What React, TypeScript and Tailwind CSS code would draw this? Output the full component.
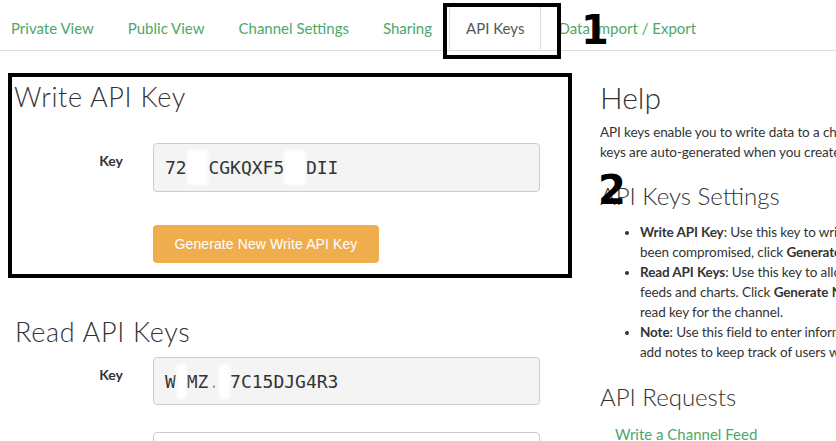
import React from "react";

const Hidden = ({ n }: { n: number }) => (
  <span className="inline-block bg-white text-transparent rounded-[4px] blur-[1.5px] my-[-4px] py-[4px]">
    {"X".repeat(n)}
  </span>
);

export default function App() {
  const tabs = ["Private View", "Public View", "Channel Settings", "Sharing", "API Keys", "Data Import / Export"];
  return (
    <div className="relative w-[836px] h-[441px] overflow-hidden bg-white text-[#333] font-['Lato',sans-serif]">
      {/* Tabs */}
      <ul className="flex pt-[6px] border-b border-[#ddd] ml-[-6px]">
        {tabs.map((t) =>
          t === "API Keys" ? (
            <li key={t} className="mb-[-1px]">
              <span className="block px-[16px] py-[11px] leading-[20px] text-[15px] text-[#555] bg-white border border-[#ddd] border-b-white rounded-t-[4px]">
                {t}
              </span>
            </li>
          ) : (
            <li key={t}>
              <span className="block px-[16px] py-[11px] leading-[20px] text-[15px] text-[#4ea769] border border-transparent">
                {t}
              </span>
            </li>
          )
        )}
      </ul>

      <div className="flex">
        {/* Left column */}
        <div className="ml-[8px] w-[564px] shrink-0">
          <div className="mt-[22px] border-4 border-black pt-[4px] pb-[11px]">
            <h2 className="text-[27px] leading-[32px] font-light tracking-[0.7px] pl-[2px] text-[#333]">Write API Key</h2>
            <div className="flex mt-[30px]">
              <label className="w-[111px] text-right font-bold text-[14px] leading-[20px] pt-[8px]">Key</label>
              <div className="ml-[30px] w-[387px] h-[49px] border border-[#ccc] rounded-[4px] bg-[#f4f4f4] pl-[11px] flex items-center font-['DejaVu_Sans_Mono',monospace] text-[18px] text-[#333] overflow-hidden whitespace-nowrap">
                72<Hidden n={2} />CGKQXF5<Hidden n={2} />DII
              </div>
            </div>
            <div className="ml-[141px] mt-[33px] w-[226px] h-[38px] rounded-[4px] bg-[#f0ad4e] text-white flex items-center justify-center font-['Liberation_Sans',sans-serif] text-[14px] tracking-[0.1px]">
              Generate New Write API Key
            </div>
          </div>

          <div className="pl-[4px]">
            <h2 className="mt-[38px] text-[27px] leading-[32px] font-light tracking-[0.7px] pl-[3px]">Read API Keys</h2>
            <div className="flex mt-[9px]">
              <label className="w-[111px] text-right font-bold text-[14px] leading-[20px] pt-[8px]">Key</label>
              <div className="ml-[30px] w-[387px] h-[48px] border border-[#ccc] rounded-[4px] bg-[#f4f4f4] pl-[11px] flex items-center font-['DejaVu_Sans_Mono',monospace] text-[18px] text-[#333] overflow-hidden whitespace-nowrap">
                W<Hidden n={1} />MZ<span className="opacity-40">.</span><Hidden n={1} />7C15DJG4R3
              </div>
            </div>
            <div className="flex mt-[27px]">
              <div className="w-[111px]" />
              <div className="ml-[30px] w-[387px] h-[48px] border border-[#ccc] rounded-[4px] bg-white" />
            </div>
          </div>
        </div>

        {/* Right column */}
        <div className="ml-[28px] whitespace-nowrap">
          <h2 className="mt-[28px] text-[30px] leading-[36px] font-light">Help</h2>
          <p className="mt-[7px] text-[13.5px] leading-[20px] tracking-[-0.1px]">
            API keys enable you to write data to a channel or read data from a private channel. API
            <br />
            keys are auto-generated when you create a new channel.
          </p>
          <h3 className="mt-[19px] text-[24px] leading-[30px] font-light">API Keys Settings</h3>
          <ul className="mt-[11px] list-disc pl-[40px] text-[13.5px] leading-[20px] tracking-[-0.1px]">
            <li>
              <b>Write API Key</b>: Use this key to write data to a channel. If you feel your key has
              <br />
              been compromised, click <b>Generate New Write API Key</b>.
            </li>
            <li>
              <b>Read API Keys</b>: Use this key to allow other people to view your private channel
              <br />
              feeds and charts. Click <b>Generate New Read API Key</b> to generate an additional
              <br />
              read key for the channel.
            </li>
            <li>
              <b>Note</b>: Use this field to enter information about channel read keys. For example,
              <br />
              add notes to keep track of users with access to your channel.
            </li>
          </ul>
          <h3 className="mt-[20px] text-[24px] leading-[30px] font-light">API Requests</h3>
          <div className="mt-[12px] ml-[15px] text-[15px] leading-[20px] text-[#4ea769]">Write a Channel Feed</div>
        </div>
      </div>

      {/* Annotations */}
      <div className="absolute left-[443px] top-[3px] w-[118px] h-[56px] border-4 border-black" />
      <div className="absolute left-[581px] top-[6px] font-['DejaVu_Sans',sans-serif] font-bold text-[40px] leading-[48px] text-black">1</div>
      <div className="absolute left-[598px] top-[166px] font-['DejaVu_Sans',sans-serif] font-bold text-[40px] leading-[48px] text-black">2</div>
    </div>
  );
}
